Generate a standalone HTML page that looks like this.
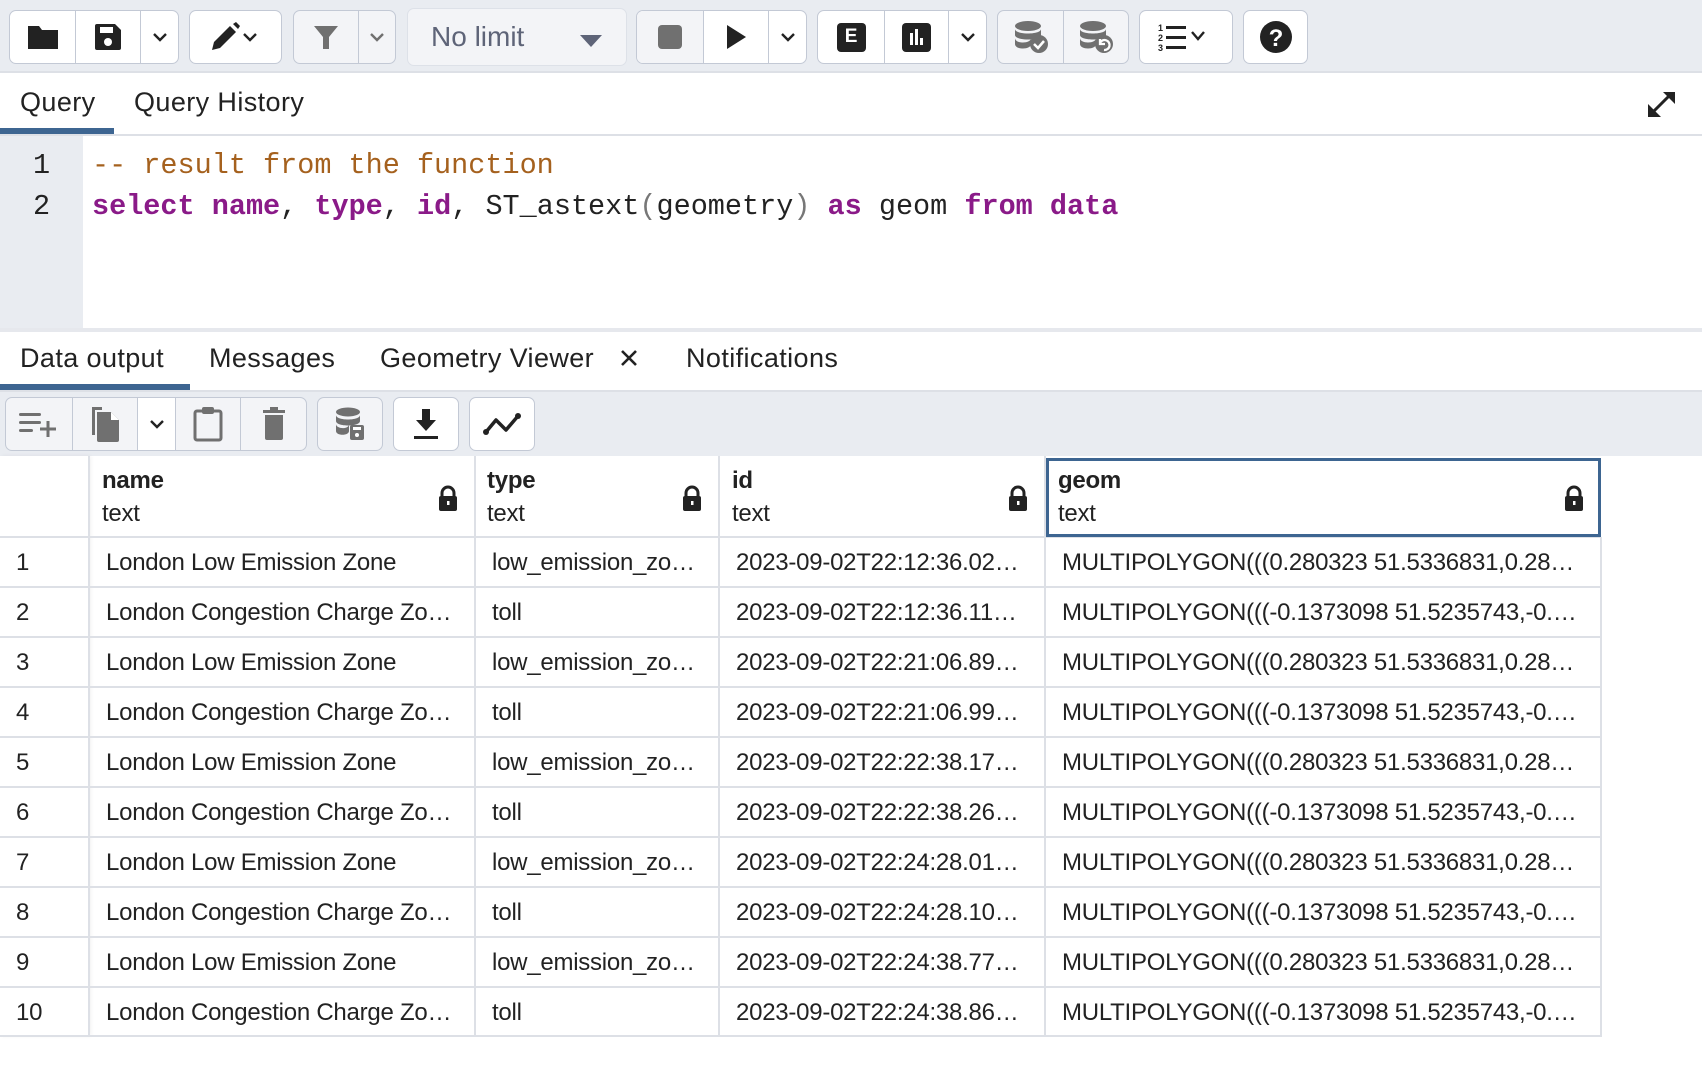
<!DOCTYPE html>
<html><head><meta charset="utf-8"><style>
*{box-sizing:border-box;margin:0;padding:0}
body{width:1702px;height:1076px;background:#fff;font-family:"Liberation Sans",sans-serif;color:#222;position:relative;overflow:hidden}
.abs{position:absolute}
.grp{position:absolute;border:1.5px solid #c3c9d5;border-radius:7px;display:flex;overflow:hidden;background:#fff}
.grp.dis{background:#f3f4f7}
.b{height:100%;display:flex;align-items:center;justify-content:center;border-left:1.5px solid #c3c9d5}
.b:first-child{border-left:none}
.b.dis{background:#f3f4f7}
.tab{position:absolute;font-size:27px;color:#222;letter-spacing:0.4px}
.cell{position:absolute;font-size:24px;color:#222;white-space:nowrap;letter-spacing:-0.25px}
.hl{position:absolute;background:#dde0e6}
.code{position:absolute;font-family:"Liberation Mono",monospace;font-size:28.5px;white-space:pre;color:#222}
.kw{color:#8a1a88;font-weight:bold}
.cm{color:#a5611e}
</style></head><body>
<!-- top toolbar -->
<div class="abs" style="left:0;top:0;width:1702px;height:73px;background:#e9ecf1;border-bottom:2px solid #dde0e6"></div>
<div class="grp" style="left:9px;top:10px;width:170px;height:54px">
 <div class="b" style="width:66px"><svg width="34" height="28" viewBox="0 0 34 28"><path d="M2 3h11l3 4h16v19H2z" fill="#222"/></svg></div>
 <div class="b" style="width:66px"><svg width="30" height="30" viewBox="0 0 30 30"><path d="M2 4a2 2 0 0 1 2-2h18l6 6v18a2 2 0 0 1-2 2H4a2 2 0 0 1-2-2z" fill="#222"/><rect x="7" y="5" width="13" height="6" fill="#fff"/><circle cx="15" cy="20" r="4" fill="#fff"/></svg></div>
 <div class="b" style="width:38px"><svg width="16" height="10"><path d="M2 2l6 6 6-6" stroke="#222" stroke-width="2.4" fill="none"/></svg></div>
</div>
<div class="grp" style="left:189px;top:10px;width:93px;height:54px">
 <div class="b" style="width:93px"><svg width="60" height="30" viewBox="0 0 60 30"><path d="M6 28l2-8 16-16 6 6-16 16z" fill="#222"/><path d="M27 2l3-2 4 4-2 3z" fill="#222"/><path d="M38 12l6 6 6-6" stroke="#222" stroke-width="2.4" fill="none"/></svg></div>
</div>
<div class="grp dis" style="left:293px;top:10px;width:103px;height:54px">
 <div class="b" style="width:65px"><svg width="28" height="28" viewBox="0 0 28 28"><path d="M2 3h24l-9 11v12h-6V14z" fill="#707070"/></svg></div>
 <div class="b" style="width:38px"><svg width="16" height="10"><path d="M2 2l6 6 6-6" stroke="#707070" stroke-width="2.4" fill="none"/></svg></div>
</div>
<div class="grp dis" style="left:407px;top:8px;width:220px;height:58px;border-color:#dde1e8">
 <div style="position:absolute;left:23px;top:12px;font-size:28px;color:#5e6478">No limit</div>
 <svg class="abs" style="left:172px;top:26px" width="22" height="12"><path d="M0 0h22L11 12z" fill="#5e6478"/></svg>
</div>
<div class="grp" style="left:636px;top:10px;width:171px;height:54px">
 <div class="b dis" style="width:67px"><div style="width:24px;height:24px;background:#707070;border-radius:4px"></div></div>
 <div class="b" style="width:66px"><svg width="22" height="26"><path d="M2 1l19 12L2 25z" fill="#222"/></svg></div>
 <div class="b" style="width:38px"><svg width="16" height="10"><path d="M2 2l6 6 6-6" stroke="#222" stroke-width="2.4" fill="none"/></svg></div>
</div>
<div class="grp" style="left:817px;top:10px;width:170px;height:54px">
 <div class="b" style="width:67px"><div style="width:29px;height:29px;background:#222;border-radius:4px;color:#fff;font-weight:bold;font-size:19px;display:flex;align-items:center;justify-content:center">E</div></div>
 <div class="b" style="width:65px"><svg width="29" height="29"><rect width="29" height="29" rx="4" fill="#222"/><rect x="8" y="10" width="3" height="12" fill="#fff"/><rect x="13" y="6" width="3" height="16" fill="#fff"/><rect x="18" y="15" width="3" height="7" fill="#fff"/></svg></div>
 <div class="b" style="width:38px"><svg width="16" height="10"><path d="M2 2l6 6 6-6" stroke="#222" stroke-width="2.4" fill="none"/></svg></div>
</div>
<div class="grp dis" style="left:997px;top:10px;width:132px;height:54px">
 <div class="b" style="width:66px"><svg width="36" height="34" viewBox="0 0 36 34"><ellipse cx="15" cy="6" rx="13" ry="5" fill="#707070"/><path d="M2 9c0 6 26 6 26 0v6c0 6-26 6-26 0zM2 18c0 6 16 6 16 0v6c0 6-16 6-16 0z" fill="#707070"/><circle cx="26" cy="24" r="9" fill="#707070"/><path d="M21 24l4 4 6-7" stroke="#fff" stroke-width="2.5" fill="none"/></svg></div>
 <div class="b" style="width:66px"><svg width="36" height="34" viewBox="0 0 36 34"><ellipse cx="15" cy="6" rx="13" ry="5" fill="#707070"/><path d="M2 9c0 6 26 6 26 0v6c0 6-26 6-26 0zM2 18c0 6 16 6 16 0v6c0 6-16 6-16 0z" fill="#707070"/><circle cx="26" cy="24" r="9" fill="#707070"/><path d="M22 23a5 5 0 1 1 4 7M22 19v5h5" stroke="#fff" stroke-width="2.3" fill="none"/></svg></div>
</div>
<div class="grp" style="left:1139px;top:10px;width:94px;height:54px">
 <div class="b" style="width:94px"><svg width="56" height="30" viewBox="0 0 56 30"><text x="0" y="9" font-size="9" font-family="Liberation Sans" font-weight="bold" fill="#222">1</text><text x="0" y="19" font-size="9" font-family="Liberation Sans" font-weight="bold" fill="#222">2</text><text x="0" y="29" font-size="9" font-family="Liberation Sans" font-weight="bold" fill="#222">3</text><rect x="8" y="4" width="20" height="3" fill="#222"/><rect x="8" y="14" width="20" height="3" fill="#222"/><rect x="8" y="24" width="20" height="3" fill="#222"/><path d="M34 10l6 7 6-7" stroke="#222" stroke-width="2.4" fill="none"/></svg></div>
</div>
<div class="grp" style="left:1243px;top:10px;width:65px;height:54px">
 <div class="b" style="width:65px"><svg width="34" height="34"><circle cx="17" cy="17" r="16" fill="#222"/><text x="17" y="26" text-anchor="middle" font-size="24" font-weight="bold" font-family="Liberation Sans" fill="#fff">?</text></svg></div>
</div>

<!-- query tabs -->
<div class="tab" style="left:20px;top:87px">Query</div>
<div class="tab" style="left:134px;top:87px">Query History</div>
<div class="abs" style="left:0;top:128px;width:114px;height:6px;background:#3d6591"></div>
<div class="abs" style="left:0;top:134px;width:1702px;height:2px;background:#dde0e6"></div>
<svg class="abs" style="left:1647px;top:90px" width="29" height="28" viewBox="0 0 29 28"><path d="M5 23L24 4" stroke="#222" stroke-width="3"/><path d="M16 2h12v12zM1 14v13h13z" fill="#222"/></svg>

<!-- editor -->
<div class="abs" style="left:0;top:136px;width:83px;height:192px;background:#e9ecf1"></div>
<div class="code" style="left:33px;top:149px">1</div>
<div class="code" style="left:33px;top:190px">2</div>
<div class="code" style="left:92px;top:149px"><span class="cm">-- result from the function</span></div>
<div class="code" style="left:92px;top:190px"><span class="kw">select</span> <span class="kw">name</span>, <span class="kw">type</span>, <span class="kw">id</span>, ST_astext<span style="color:#777">(</span>geometry<span style="color:#777">)</span> <span class="kw">as</span> geom <span class="kw">from</span> <span class="kw">data</span></div>
<div class="abs" style="left:0;top:328px;width:1702px;height:4px;background:#e6e8ed"></div>

<!-- output tabs -->
<div class="tab" style="left:20px;top:343px">Data output</div>
<div class="tab" style="left:209px;top:343px">Messages</div>
<div class="tab" style="left:380px;top:343px">Geometry Viewer</div>
<svg class="abs" style="left:620px;top:349px" width="18" height="18"><path d="M2 2l14 14M16 2L2 16" stroke="#222" stroke-width="2.6"/></svg>
<div class="tab" style="left:686px;top:343px">Notifications</div>
<div class="abs" style="left:0;top:384px;width:190px;height:6px;background:#3d6591"></div>

<!-- data toolbar -->
<div class="abs" style="left:0;top:390px;width:1702px;height:66px;background:#e9ecf1;border-top:2px solid #dde0e6"></div>
<div class="grp dis" style="left:5px;top:397px;width:302px;height:54px">
 <div class="b" style="width:66px"><svg width="40" height="30" viewBox="0 0 40 30"><rect x="0" y="4" width="22" height="3" rx="1.5" fill="#707070"/><rect x="0" y="12" width="22" height="3" rx="1.5" fill="#707070"/><rect x="0" y="20" width="14" height="3" rx="1.5" fill="#707070"/><path d="M29 12v16M21 20h16" stroke="#707070" stroke-width="3"/></svg></div>
 <div class="b" style="width:66px"><svg width="32" height="36" viewBox="0 0 32 36"><path d="M3 1h10v3H6v25H3z" fill="#707070"/><path d="M8 6h14l8 8v20a2 2 0 0 1-2 2H10a2 2 0 0 1-2-2z" fill="#707070"/><path d="M22 6v8h8" fill="#fff"/></svg></div>
 <div class="b" style="width:38px;background:#fff"><svg width="16" height="10"><path d="M2 2l6 6 6-6" stroke="#222" stroke-width="2.4" fill="none"/></svg></div>
 <div class="b" style="width:66px"><svg width="30" height="36" viewBox="0 0 30 36"><rect x="2" y="5" width="26" height="29" rx="2" fill="none" stroke="#707070" stroke-width="3"/><rect x="9" y="1" width="12" height="7" rx="2" fill="#707070"/></svg></div>
 <div class="b" style="width:66px"><svg width="24" height="34" viewBox="0 0 24 34"><rect x="1" y="3" width="22" height="3" fill="#707070"/><rect x="8" y="0" width="8" height="3" fill="#707070"/><path d="M3 8h18v23a2 2 0 0 1-2 2H5a2 2 0 0 1-2-2z" fill="#707070"/></svg></div>
</div>
<div class="grp dis" style="left:317px;top:397px;width:66px;height:54px">
 <div class="b" style="width:66px"><svg width="30" height="34" viewBox="0 0 30 34"><ellipse cx="13" cy="5" rx="12" ry="4.5" fill="#707070"/><path d="M1 8c0 6 24 6 24 0v6c0 6-24 6-24 0zM1 17c0 5 13 6 13 0v7c0 5-13 5-13 0z" fill="#707070"/><rect x="15" y="18" width="14" height="15" rx="2" fill="#707070"/><rect x="18" y="20" width="8" height="3" fill="#fff"/><circle cx="22" cy="28" r="2" fill="#fff"/></svg></div>
</div>
<div class="grp" style="left:393px;top:397px;width:66px;height:54px">
 <div class="b" style="width:66px"><svg width="26" height="32" viewBox="0 0 26 32"><path d="M9 1h8v11h6L13 23 3 12h6z" fill="#222"/><rect x="1" y="28" width="24" height="3" fill="#222"/></svg></div>
</div>
<div class="grp" style="left:469px;top:397px;width:66px;height:54px">
 <div class="b" style="width:66px"><svg width="38" height="24" viewBox="0 0 38 24"><path d="M3 20l10-12 10 10 12-14" stroke="#222" stroke-width="3.5" fill="none" stroke-linejoin="round"/><circle cx="3" cy="20" r="3" fill="#222"/><circle cx="35" cy="4" r="3" fill="#222"/></svg></div>
</div>

<!-- table -->
<div class="abs" style="left:0;top:456px;width:89px;height:580px;box-shadow:2px 0 4px rgba(0,0,0,.06)"></div>
<div class="hl" style="left:0;top:536px;width:1601px;height:2px"></div>
<div class="hl" style="left:0;top:1035px;width:1601px;height:2px"></div>
<div class="hl" style="left:88px;top:456px;width:2px;height:581px"></div>
<div class="hl" style="left:474px;top:456px;width:2px;height:581px"></div>
<div class="hl" style="left:718px;top:456px;width:2px;height:581px"></div>
<div class="hl" style="left:1044px;top:456px;width:2px;height:581px"></div>
<div class="hl" style="left:1600px;top:537px;width:2px;height:500px"></div>
<div class="abs" style="left:1046px;top:458px;width:555px;height:79px;border:3px solid #3d6591"></div>

<div class="cell" style="left:102px;top:467px;font-weight:bold">name</div>
<div class="cell" style="left:102px;top:500px">text</div>
<div class="cell" style="left:487px;top:467px;font-weight:bold">type</div>
<div class="cell" style="left:487px;top:500px">text</div>
<div class="cell" style="left:732px;top:467px;font-weight:bold">id</div>
<div class="cell" style="left:732px;top:500px">text</div>
<div class="cell" style="left:1058px;top:467px;font-weight:bold">geom</div>
<div class="cell" style="left:1058px;top:500px">text</div>
<svg class="abs" style="left:438px;top:485px" width="20" height="27" viewBox="0 0 20 27"><path d="M4 11V8a6 6 0 0 1 12 0v3" stroke="#222" stroke-width="3" fill="none"/><rect x="1" y="11" width="18" height="15" rx="2" fill="#222"/><rect x="9" y="16" width="2.5" height="4" fill="#fff"/></svg>
<svg class="abs" style="left:682px;top:485px" width="20" height="27" viewBox="0 0 20 27"><path d="M4 11V8a6 6 0 0 1 12 0v3" stroke="#222" stroke-width="3" fill="none"/><rect x="1" y="11" width="18" height="15" rx="2" fill="#222"/><rect x="9" y="16" width="2.5" height="4" fill="#fff"/></svg>
<svg class="abs" style="left:1008px;top:485px" width="20" height="27" viewBox="0 0 20 27"><path d="M4 11V8a6 6 0 0 1 12 0v3" stroke="#222" stroke-width="3" fill="none"/><rect x="1" y="11" width="18" height="15" rx="2" fill="#222"/><rect x="9" y="16" width="2.5" height="4" fill="#fff"/></svg>
<svg class="abs" style="left:1564px;top:485px" width="20" height="27" viewBox="0 0 20 27"><path d="M4 11V8a6 6 0 0 1 12 0v3" stroke="#222" stroke-width="3" fill="none"/><rect x="1" y="11" width="18" height="15" rx="2" fill="#222"/><rect x="9" y="16" width="2.5" height="4" fill="#fff"/></svg>

<div id="rows"></div>
<script>
var ids=["2023-09-02T22:12:36.02…","2023-09-02T22:12:36.11…","2023-09-02T22:21:06.89…","2023-09-02T22:21:06.99…","2023-09-02T22:22:38.17…","2023-09-02T22:22:38.26…","2023-09-02T22:24:28.01…","2023-09-02T22:24:28.10…","2023-09-02T22:24:38.77…","2023-09-02T22:24:38.86…"];
var h="";
for(var i=0;i<10;i++){
 var y=537+i*50, t=y+12, odd=i%2==0;
 if(i>0)h+='<div class="hl" style="left:0;top:'+(y-1)+'px;width:1601px;height:2px"></div>';
 h+='<div class="cell" style="left:16px;top:'+t+'px">'+(i+1)+'</div>';
 h+='<div class="cell" style="left:106px;top:'+t+'px">'+(odd?'London Low Emission Zone':'London Congestion Charge Zo…')+'</div>';
 h+='<div class="cell" style="left:492px;top:'+t+'px">'+(odd?'low_emission_zo…':'toll')+'</div>';
 h+='<div class="cell" style="left:736px;top:'+t+'px">'+ids[i]+'</div>';
 h+='<div class="cell" style="left:1062px;top:'+t+'px">'+(odd?'MULTIPOLYGON(((0.280323 51.5336831,0.28…':'MULTIPOLYGON(((-0.1373098 51.5235743,-0.…')+'</div>';
}
document.getElementById('rows').innerHTML=h;
</script>
</body></html>
